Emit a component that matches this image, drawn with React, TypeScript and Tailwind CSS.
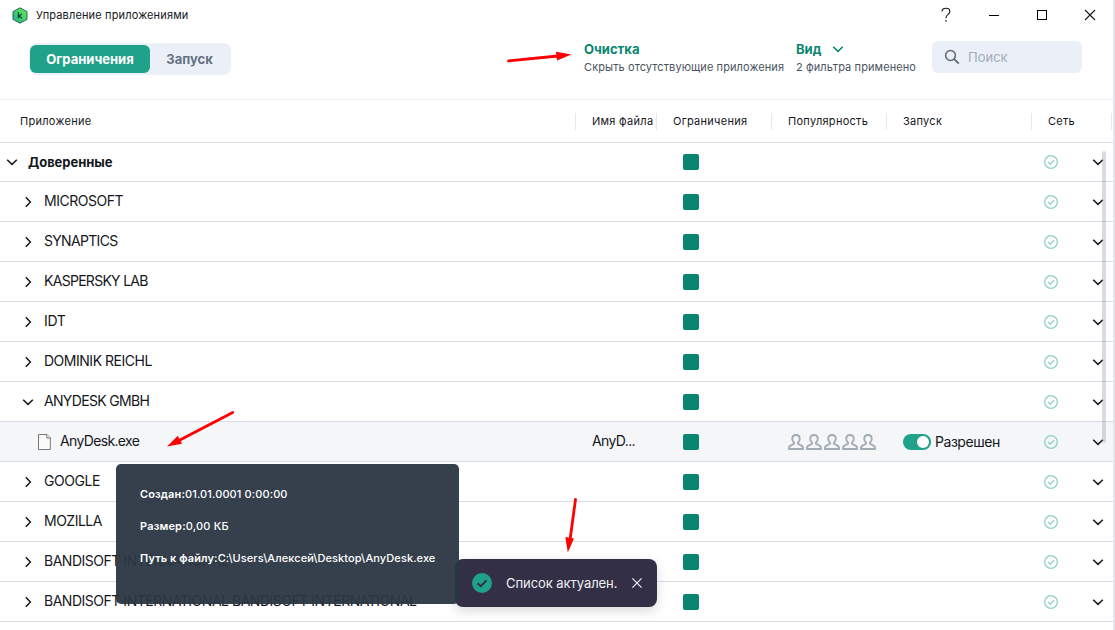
import type { ReactNode } from "react";

type RowData = {
  name: string;
  kind: "root" | "group" | "file";
  open?: boolean;
  tracking: string;
};

const rows: RowData[] = [
  { name: "Доверенные", kind: "root", open: true, tracking: "tracking-[-0.05px]" },
  { name: "MICROSOFT", kind: "group", tracking: "tracking-[-0.47px]" },
  { name: "SYNAPTICS", kind: "group", tracking: "tracking-[-0.68px]" },
  { name: "KASPERSKY LAB", kind: "group", tracking: "tracking-[-0.71px]" },
  { name: "IDT", kind: "group", tracking: "tracking-[-0.35px]" },
  { name: "DOMINIK REICHL", kind: "group", tracking: "tracking-[-0.48px]" },
  { name: "ANYDESK GMBH", kind: "group", open: true, tracking: "tracking-[-0.67px]" },
  { name: "AnyDesk.exe", kind: "file", tracking: "tracking-[-0.65px]" },
  { name: "GOOGLE", kind: "group", tracking: "tracking-[-0.42px]" },
  { name: "MOZILLA", kind: "group", tracking: "tracking-[-0.5px]" },
  { name: "BANDISOFT INTERNATIONAL", kind: "group", tracking: "tracking-[-0.48px]" },
  { name: "BANDISOFT INTERNATIONAL BANDISOFT INTERNATIONAL", kind: "group", tracking: "tracking-[-0.48px]" },
];

const columns = "grid grid-cols-[575px_81px_115px_115px_145px_80px_1fr]";

function Chevron({ open, className = "" }: { open?: boolean; className?: string }) {
  return (
    <svg width="12" height="12" viewBox="0 0 12 12" fill="none" stroke="currentColor" strokeWidth="1.5" className={className}>
      <path d={open ? "M1.2 3.8 L6 8.4 L10.8 3.8" : "M3.8 1.2 L8.4 6 L3.8 10.8"} />
    </svg>
  );
}

function Allowed() {
  return (
    <svg width="14" height="14" viewBox="0 0 14 14" fill="none" stroke="#8ed1c2" strokeWidth="1.3">
      <circle cx="7" cy="7" r="6.3" />
      <path d="M4 7 L6.3 9.2 L10.1 5.2" />
    </svg>
  );
}

function Person() {
  return (
    <svg width="16" height="16" viewBox="0 0 16 16" fill="none" stroke="#a1abb5" strokeWidth="1.8">
      <path d="M1 15 V13.8 C1 12.1 2.2 11.4 4 10.8 C5.8 10.2 6.6 9.6 6.1 8.8 C5 7.9 4.2 6.7 4.2 4.8 C4.2 2.3 5.7 1 8 1 C10.3 1 11.8 2.3 11.8 4.8 C11.8 6.7 11 7.9 9.9 8.8 C9.4 9.6 10.2 10.2 12 10.8 C13.8 11.4 15 12.1 15 13.8 V15 Z" />
    </svg>
  );
}

function FileIcon() {
  return (
    <svg width="13" height="16" viewBox="0 0 13 16" fill="#fafafa" stroke="#777777">
      <path d="M0.5 0.5 H9 L12.3 3.8 V15.5 H0.5 Z" />
      <path d="M8.8 0.7 V4 H12.2" />
    </svg>
  );
}

function HeaderCell({ children }: { children?: ReactNode }) {
  return (
    <div className="flex h-[17px] items-center whitespace-nowrap border-l border-[#e6e8ec] pl-4">
      {children}
    </div>
  );
}

function Row({ row }: { row: RowData }) {
  const isFile = row.kind === "file";
  const isRoot = row.kind === "root";
  return (
    <div
      className={
        columns +
        " items-center border-b border-[#d9dce4] text-[14px] " +
        (isRoot ? "h-[39px] " : "h-10 pt-px ") +
        (isFile ? "bg-[#f5f6f8]" : "")
      }
    >
      <div className={"flex items-center whitespace-nowrap " + (isFile ? "pl-[38px]" : isRoot ? "pl-[6px]" : "pl-[22px]")}>
        {isFile ? <FileIcon /> : <Chevron open={row.open} />}
        <span
          className={
            row.tracking +
            (isRoot ? " ml-[10px] pt-px text-[13px] font-bold" : isFile ? " ml-[9px] pb-[3px]" : " ml-[10px] pb-[3px]")
          }
        >
          {row.name}
        </span>
      </div>
      <div className="pb-[3px] pl-[17px] tracking-[-0.6px]">{isFile ? "AnyD..." : ""}</div>
      <div className="pl-[27px]">
        <div className="size-4 rounded-[2px] bg-[#0a8570]" />
      </div>
      <div className="flex gap-[2px] pl-[17px]">{isFile && [0, 1, 2, 3, 4].map((i) => <Person key={i} />)}</div>
      <div className="flex items-center pl-[17px]">
        {isFile && (
          <>
            <div className="flex h-4 w-7 items-center justify-end rounded-full bg-[#1fa289] pr-[2px]">
              <div className="size-3 rounded-full bg-white" />
            </div>
            <span className="ml-1 pb-px tracking-[-0.45px]">Разрешен</span>
          </>
        )}
      </div>
      <div className="pl-[13px]">
        <Allowed />
      </div>
      <div className="-ml-[19px] w-3">
        <Chevron open />
      </div>
    </div>
  );
}

export default function App() {
  return (
    <div className="relative h-[630px] w-[1115px] overflow-hidden bg-white font-['Inter','Liberation_Sans',sans-serif] text-[#15171c]">
      <div className="flex h-[630px] w-[1115px] flex-col border-r-2 border-[#e5e7ea]">
        <header className="flex h-[30px] shrink-0 items-center pl-3">
          <svg width="16" height="17" viewBox="0 0 16 17">
            <defs>
              <linearGradient id="badge" x1="0" y1="1" x2="1" y2="0">
                <stop offset="0" stopColor="#20b28e" />
                <stop offset="1" stopColor="#62ee4c" />
              </linearGradient>
            </defs>
            <path d="M8 0.8 L15 4.6 V12.4 L8 16.2 L1 12.4 V4.6 Z" fill="url(#badge)" stroke="#24584e" strokeWidth="0.9" />
            <path d="M6.3 4.9 V11.3 M9.8 7 L6.8 9 L9.9 11.3" fill="none" stroke="#12352f" strokeWidth="1.1" />
          </svg>
          <h1 className="ml-2 whitespace-nowrap text-[11px] tracking-[0.15px]">Управление приложениями</h1>
          <div className="ml-auto flex items-center pr-[17px]">
            <svg width="12" height="16" viewBox="0 0 12 16" fill="none" stroke="#15171c" strokeWidth="1.1">
              <path d="M2 4.6 C2 2.3 3.6 1.2 6 1.2 C8.3 1.2 9.9 2.4 9.9 4.4 C9.9 6.2 8.9 6.8 7.8 7.6 C6.5 8.5 6 9.1 6 11.3 M6 13 V14.7" />
            </svg>
            <svg width="12" height="12" viewBox="0 0 12 12" className="ml-9 text-black">
              <path d="M1 6.5 H11" stroke="currentColor" />
            </svg>
            <svg width="12" height="12" viewBox="0 0 12 12" className="ml-9">
              <rect x="1.5" y="1.5" width="9" height="9" fill="none" stroke="#000" />
            </svg>
            <svg width="12" height="12" viewBox="0 0 12 12" className="ml-9">
              <path d="M1 1 L11 11 M11 1 L1 11" stroke="#15171c" strokeWidth="1.1" />
            </svg>
          </div>
        </header>

        <div className="flex h-[70px] shrink-0 items-start border-b border-[#eceef0] pl-[29px]">
          <div className="mt-[13px] flex h-8 w-[202px] items-center rounded-lg bg-[#ebf0f8] text-[13px] font-bold">
            <div className="ml-px flex h-7 w-[120px] items-center justify-center rounded-md bg-[#1fa289] pt-[2px] text-white">Ограничения</div>
            <div className="flex w-[79px] justify-center pt-[2px] text-[#667282]">Запуск</div>
          </div>
          <div className="ml-[353px] mt-[11px] w-[212px] whitespace-nowrap">
            <div className="text-[13px] font-bold leading-4 text-[#0a8570]">Очистка</div>
            <div className="mt-[2px] text-[11px] leading-4 tracking-[0.09px] text-[#4a5460]">Скрыть отсутствующие приложения</div>
          </div>
          <div className="mt-[11px] w-[136px] whitespace-nowrap">
            <div className="flex items-center text-[13px] font-bold leading-4 text-[#0a8570]">
              Вид
              <Chevron open className="ml-[11px]" />
            </div>
            <div className="mt-[2px] text-[11px] leading-4 tracking-[0.1px] text-[#4a5460]">2 фильтра применено</div>
          </div>
          <div className="mt-[11px] flex h-8 w-[150px] items-center rounded-md bg-[#ebf0f8] pl-3 text-[13px] text-[#a2abb8]">
            <svg width="16" height="16" viewBox="0 0 16 16" fill="none" stroke="#5c6773" strokeWidth="1.5">
              <circle cx="6.5" cy="6.5" r="4.9" />
              <path d="M10.2 10.2 L14.8 14.6" strokeWidth="1.8" />
            </svg>
            <span className="ml-2 pt-[2px]">Поиск</span>
          </div>
        </div>

        <div className={columns + " h-[43px] shrink-0 items-center border-b border-[#d9dce4] text-[11px] tracking-[0.28px]"}>
          <div className="pl-5">Приложение</div>
          <HeaderCell>Имя файла</HeaderCell>
          <HeaderCell>Ограничения</HeaderCell>
          <HeaderCell>Популярность</HeaderCell>
          <HeaderCell>Запуск</HeaderCell>
          <HeaderCell>Сеть</HeaderCell>
          <HeaderCell />
        </div>

        <main>
          {rows.map((row) => (
            <Row key={row.name} row={row} />
          ))}
        </main>
      </div>

      <div className="absolute left-[1102px] top-[151px] h-[292px] w-1 rounded-full bg-[#80899a]/30" />

      <div className="absolute left-[455px] top-[559px] flex h-12 w-[202px] items-center rounded-lg bg-[#332f46] pl-[17px] text-[13px] text-[#f0f0f4] shadow-[0_4px_12px_rgba(0,0,0,0.15)]">
        <svg width="20" height="20" viewBox="0 0 20 20">
          <circle cx="10" cy="10" r="10" fill="#1fa289" />
          <path d="M5.6 10.2 L8.8 13.2 L14.5 7.4" fill="none" stroke="#332f46" strokeWidth="2" />
        </svg>
        <span className="ml-[14px] w-[126px] whitespace-nowrap pt-[2px] tracking-[-0.06px]">Список актуален.</span>
        <svg width="10" height="10" viewBox="0 0 10 10">
          <path d="M0.4 0.4 L9.6 9.6 M9.6 0.4 L0.4 9.6" stroke="#f0f0f4" strokeWidth="1.2" />
        </svg>
      </div>

      <div className="absolute left-[116px] top-[464px] flex h-[140px] w-[343px] flex-col gap-4 whitespace-nowrap rounded-[5px] bg-[#2b3642]/95 pl-6 pt-[22px] text-[11px] font-medium leading-4 tracking-[0.09px] text-white">
        <div className="tracking-[0.12px]"><b className="font-semibold">Создан:</b>01.01.0001 0:00:00</div>
        <div className="tracking-[0.18px]"><b className="font-semibold">Размер:</b>0,00 КБ</div>
        <div><b className="font-semibold">Путь к файлу:</b>C:\Users\Алексей\Desktop\AnyDesk.exe</div>
      </div>

      <svg className="pointer-events-none absolute inset-0" width="1115" height="630" viewBox="0 0 1115 630" fill="#ff0000" stroke="#ff0000" strokeLinecap="round">
        <path d="M508.5 60.8 L558 56" strokeWidth="2.8" />
        <path d="M571.5 54.5 L557 60.5 L556 51.8 Z" stroke="none" />
        <path d="M232.7 412.5 L178 441" strokeWidth="2.8" />
        <path d="M167 446.5 L177.8 435.8 L182 443.8 Z" stroke="none" />
        <path d="M575.5 499.5 L570 540" strokeWidth="2.8" />
        <path d="M567.8 552.5 L565.3 537 L574 538.5 Z" stroke="none" />
      </svg>
    </div>
  );
}
